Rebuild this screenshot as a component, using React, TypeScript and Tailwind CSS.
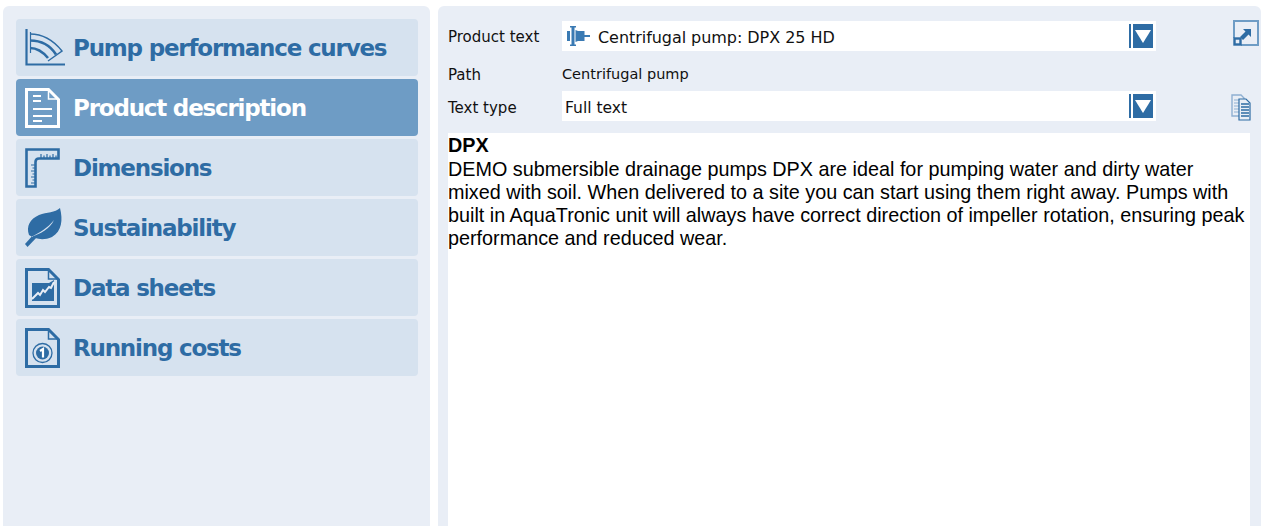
const BLUE = "#2e6ca4";

function Curves() {
  return (
    <svg width="42" height="38" viewBox="0 0 42 38" fill="none" stroke="#2e6ca4">
      <path d="M1.5 0V35.5H40" strokeWidth="2.2" />
      <path d="M5.5 3V24" strokeWidth="1.2" />
      <path d="M5 5C18 5 29 12 37 22L23 32" strokeWidth="1.4" />
      <path d="M5 11.5C15 11.5 25 16 31 25.5" strokeWidth="2.6" />
      <path d="M5 19C12 19 18 23 23 29" strokeWidth="2.6" />
    </svg>
  );
}

function Doc({ children, color = BLUE }: { children?: React.ReactNode; color?: string }) {
  return (
    <svg width="35" height="40" viewBox="0 0 35 40" fill="none">
      <path d="M1.5 1.5H23.5L33.5 11.5V38.5H1.5Z" stroke={color} strokeWidth="3" />
      <path d="M23.5 2V11H33" stroke={color} strokeWidth="1.5" />
      {children}
    </svg>
  );
}

function Ruler() {
  return (
    <svg width="35" height="40" viewBox="0 0 35 40" fill="none" stroke="#2e6ca4">
      <path d="M1.5 1.5H33.5V10.5H14Q10.5 10.5 10.5 14V38.5H1.5Z" strokeWidth="2.6" />
      <path
        d="M16 6V10M19 7.5V10M22 6V10M25 7.5V10M28 6V10M31 7.5V10M6 17H10M7.5 20H10M6 23H10M7.5 26H10M6 29H10M7.5 32H10M6 35H10"
        strokeWidth="1.2"
      />
    </svg>
  );
}

function Leaf() {
  return (
    <svg width="38" height="40" viewBox="0 0 38 40">
      <path d="M35 0C38 12 37 23 27 29C18 33 10 31 4 27C1 18 5 11 14 7C22 4 30 5 35 0Z" fill="#2e6ca4" />
      <path d="M9 26L0 36L2.5 39L13 28Z" fill="#2e6ca4" />
      <path d="M6 29C14 25 23 20 29 12C25 21 15 26 6 29Z" fill="#d6e2ef" />
    </svg>
  );
}

function Arrow() {
  return (
    <span className="flex h-[24px] items-center">
      <span className="h-[24px] w-[2px] bg-[#2e6ca4]" />
      <span className="ml-[2px] flex h-[24px] w-[20px] items-center justify-center bg-[#2e6ca4]">
        <svg width="16" height="13" viewBox="0 0 16 13">
          <path d="M0 0H16L8 13Z" fill="#fff" />
        </svg>
      </span>
    </span>
  );
}

function Item({ icon, label, active }: { icon: React.ReactNode; label: string; active?: boolean }) {
  return (
    <div
      className={
        "flex h-[57px] items-center rounded-[4px] pl-[9px] " +
        (active ? "bg-[#6e9cc5] text-white" : "bg-[#d6e2ef] text-[#2e6ca4]")
      }
    >
      <span className="flex h-[40px] w-[48px] shrink-0 items-center">{icon}</span>
      <span className="pt-[2px] text-[23px] font-bold tracking-[-1.2px] [font-family:'DejaVu_Sans',sans-serif]">
        {label}
      </span>
    </div>
  );
}

function Row({
  label,
  children,
  className,
  labelClass,
}: {
  label: string;
  children: React.ReactNode;
  className?: string;
  labelClass?: string;
}) {
  return (
    <div className={"flex items-center " + (className ?? "")}>
      <span className={"w-[114px] shrink-0 text-[15px] text-[#111] " + (labelClass ?? "")}>{label}</span>
      {children}
    </div>
  );
}

export default function App() {
  return (
    <div className="flex h-[526px] w-[1270px] gap-[8px] overflow-hidden bg-white pl-[3px] pr-[9px] pt-[6px] [font-family:'DejaVu_Sans',sans-serif]">
      <aside className="flex w-[427px] shrink-0 flex-col gap-[3px] rounded-t-[6px] bg-[#e9eef6] pl-[13px] pr-[12px] pt-[13px]">
        <Item icon={<Curves />} label="Pump performance curves" />
        <Item
          active
          label="Product description"
          icon={
            <Doc color="#ffffff">
              <path d="M8 8H16M8 13H16M8 21H27M8 28H27M8 33H17" stroke="#fff" strokeWidth="2.2" />
            </Doc>
          }
        />
        <Item icon={<Ruler />} label="Dimensions" />
        <Item icon={<Leaf />} label="Sustainability" />
        <Item
          label="Data sheets"
          icon={
            <Doc>
              <path d="M7 15H24L29 12V33H7Z" fill="#2e6ca4" />
              <path d="M7 31L13 25L15 27L18 22L20 24L24 19L26 20L29 14" stroke="#e9eef6" strokeWidth="2" fill="none" />
            </Doc>
          }
        />
        <Item
          label="Running costs"
          icon={
            <Doc>
              <circle cx="17.5" cy="25" r="9.5" stroke="#2e6ca4" strokeWidth="1.3" />
              <circle cx="17.5" cy="25" r="6.5" fill="#2e6ca4" />
              <path d="M15 23L18 21V29.5" stroke="#fff" strokeWidth="2.2" fill="none" />
            </Doc>
          }
        />
      </aside>

      <main className="flex min-w-0 flex-1 flex-col rounded-t-[6px] bg-[#e9eef6] pl-[10px] pr-[11px] pt-[15px]">
        <div className="mr-[-11px] flex">
          <div className="flex w-[708px] shrink-0 flex-col">
            <Row label="Product text" labelClass="pt-[3px]">
              <div className="flex h-[30px] flex-1 items-center justify-between bg-white pl-[5px] pr-[3px]">
                <span className="flex items-center gap-[8px] pt-[3px] text-[16px] tracking-[-0.05px] text-[#111]">
                  <svg width="23" height="20" viewBox="0 0 23 20" fill="#3a7ab3" className="mt-[-3px]">
                    <path d="M3 0H9V1.5H7.5V18.5H9V20H3V18.5H4.5V1.5H3Z" />
                    <path d="M0 5H3V15H0ZM8.5 4L11 5H17.5V15H11L8.5 16Z" />
                    <path d="M17 9H23V11H17Z" />
                  </svg>
                  Centrifugal pump: DPX 25 HD
                </span>
                <Arrow />
              </div>
            </Row>
            <Row label="Path" className="h-[40px] pt-[8px]" labelClass="">
              <span className="text-[14.5px] text-[#111]">Centrifugal pump</span>
            </Row>
            <Row label="Text type" labelClass="pt-[5px]">
              <div className="flex h-[30px] flex-1 items-center justify-between bg-white pl-[3px] pr-[3px]">
                <span className="pt-[5px] text-[15.5px] text-[#111]">Full text</span>
                <Arrow />
              </div>
            </Row>
          </div>
          <div className="flex flex-1 flex-col items-end pr-[2px]">
            <svg width="26" height="26" viewBox="0 0 26 26" fill="none" className="mt-[-1px]">
              <path d="M1 18V1H25V25H8" stroke="#6e9cc5" strokeWidth="2" />
              <path d="M10 9H18V17L15.5 14.5L10 20L7 17L12.5 11.5Z" fill="#2e6ca4" />
              <rect x="1.5" y="18.5" width="6" height="6" stroke="#2e6ca4" strokeWidth="2.4" />
            </svg>
            <svg width="20" height="27" viewBox="0 0 20 27" fill="none" className="mr-[8px] mt-[48px]">
              <path d="M1 1H10L13 4V22H1Z" stroke="#8fb0d2" strokeWidth="1.4" />
              <path d="M3 6H8M3 9H8M3 12H8M3 15H8M3 18H8" stroke="#8fb0d2" strokeWidth="1.2" />
              <path d="M8 5H15L19 9V26H8Z" fill="#e9eef6" stroke="#2e6ca4" strokeWidth="1.2" />
              <path d="M10 10H18M10 13H18M10 16H18M10 19H18M10 22H18" stroke="#2e6ca4" strokeWidth="1.4" />
            </svg>
          </div>
        </div>
        <div className="mt-[12px] flex-1 bg-white pt-[1px] text-[19.8px] leading-[23px] text-black [font-family:'Liberation_Sans',sans-serif]">
          <div className="font-bold">DPX</div>
          <p className="mt-[1px] w-[800px]">
            DEMO submersible drainage pumps DPX are ideal for pumping water and dirty water mixed with soil. When
            delivered to a site you can start using them right away. Pumps with built in AquaTronic unit will always
            have correct direction of impeller rotation, ensuring peak performance and reduced wear.
          </p>
        </div>
      </main>
    </div>
  );
}
